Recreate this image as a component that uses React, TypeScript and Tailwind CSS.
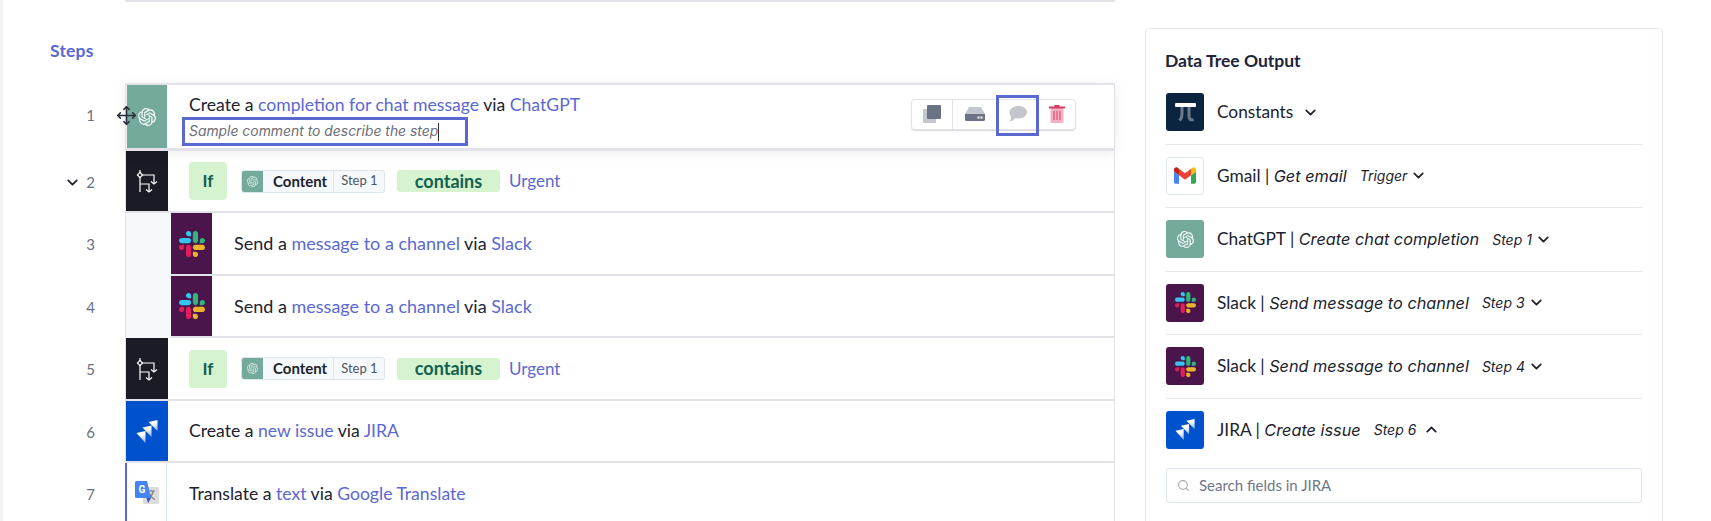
import { ChevronDown, ChevronUp, Move, Search } from "lucide-react";
import type { ReactNode } from "react";
import { SiOpenai } from "react-icons/si";

const font = "[font-family:Lato,'Noto_Sans',sans-serif]";
const italicFont = "[font-family:Inter,sans-serif] italic";

function SlackIcon({ size = 26 }: { size?: number }) {
  return (
    <svg width={size} height={size} viewBox="0 0 2447.6 2452.5">
      <path fill="#36c5f0" d="m897.4 0c-135.3.1-244.8 109.9-244.7 245.2-.1 135.3 109.5 245.1 244.8 245.2h244.8v-245.1c.1-135.3-109.5-245.1-244.9-245.3.1 0 .1 0 0 0m0 654h-652.6c-135.3.1-244.9 109.9-244.8 245.2-.2 135.3 109.4 245.1 244.7 245.3h652.7c135.3-.1 244.9-109.9 244.8-245.2.1-135.4-109.5-245.2-244.8-245.3z" />
      <path fill="#2eb67d" d="m2447.6 899.2c.1-135.3-109.5-245.1-244.8-245.2-135.3.1-244.9 109.9-244.8 245.2v245.3h244.8c135.3-.1 244.9-109.9 244.8-245.3zm-652.7 0v-654c.1-135.2-109.4-245-244.7-245.2-135.3.1-244.9 109.9-244.8 245.2v654c-.2 135.3 109.4 245.1 244.7 245.3 135.3-.1 244.9-109.9 244.8-245.3z" />
      <path fill="#ecb22e" d="m1550.1 2452.5c135.3-.1 244.9-109.9 244.8-245.2.1-135.3-109.5-245.1-244.8-245.2h-244.8v245.2c-.1 135.2 109.5 245 244.8 245.2zm0-654.1h652.7c135.3-.1 244.9-109.9 244.8-245.2.2-135.3-109.4-245.1-244.7-245.3h-652.7c-135.3.1-244.9 109.9-244.8 245.2-.1 135.4 109.4 245.2 244.7 245.3z" />
      <path fill="#e01e5a" d="m0 1553.2c-.1 135.3 109.5 245.1 244.8 245.2 135.3-.1 244.9-109.9 244.8-245.2v-245.2h-244.8c-135.3.1-244.9 109.9-244.8 245.2zm652.7 0v654c-.2 135.3 109.4 245.1 244.7 245.3 135.3-.1 244.9-109.9 244.8-245.2v-653.9c.2-135.3-109.4-245.1-244.7-245.3-135.4 0-244.9 109.8-244.8 245.1 0 0 0 .1 0 0" />
    </svg>
  );
}

function GmailIcon() {
  return (
    <svg width="22" height="17" viewBox="52 42 88 66">
      <path fill="#4285f4" d="M58 108h14V74L52 59v43c0 3.32 2.69 6 6 6" />
      <path fill="#34a853" d="M120 108h14c3.32 0 6-2.69 6-6V59l-20 15" />
      <path fill="#fbbc04" d="M120 48v26l20-15v-8c0-7.42-8.47-11.65-14.4-7.2" />
      <path fill="#ea4335" d="M72 74V48l24 18 24-18v26L96 92" />
      <path fill="#c5221f" d="M52 51v8l20 15V48l-5.6-4.2c-5.94-4.45-14.4-.22-14.4 7.2" />
    </svg>
  );
}

function JiraIcon({ id, size = 23 }: { id: string; size?: number }) {
  return (
    <svg width={size} height={size} viewBox="0 0 22 23">
      <defs>
        <linearGradient id={id} x1="0.55" y1="0" x2="0.85" y2="1">
          <stop offset="0.3" stopColor="#ffffff" />
          <stop offset="1" stopColor="#8db0ec" />
        </linearGradient>
      </defs>
      <path fill={`url(#${id})`} d="M12 2 21 0V11z" />
      <path fill={`url(#${id})`} d="M6 7.500 15 5.500V17z" />
      <path fill={`url(#${id})`} d="M0 13 9 11V23z" />
    </svg>
  );
}

function BranchIcon() {
  return (
    <svg width="24" height="24" viewBox="0 0 24 24" fill="none" stroke="#fff" strokeWidth="1.200">
      <path d="M5 1v22" />
      <path d="M5 6h14v9" />
      <path d="M16 12.500 19 15l3-2.500" />
      <path d="M5 15h9v8" />
      <path d="M11 20.500 14 23l3-2.500" />
      <rect x="3.200" y="4.200" width="3.600" height="3.600" fill="#1b1b25" transform="rotate(45 5 6)" />
    </svg>
  );
}

function TranslateIcon() {
  return (
    <svg width="24" height="26" viewBox="0 0 24 26">
      <rect x="8" y="6" width="16" height="17" rx="1.500" fill="#dcdcdc" />
      <path d="M13 10h7M16.500 9v1.500M18.500 10c-1 4-3 6-5.500 8M14.500 12.500c1 2.500 3 5 5.500 6" stroke="#7d7d7d" strokeWidth="1.100" fill="none" />
      <path d="M1.500 0H12l4 17H1.500A1.500 1.500 0 0 1 0 15.500v-14A1.500 1.500 0 0 1 1.500 0z" fill="#4285f4" />
      <path d="M11.500 17H16l-3 5z" fill="#3f51b5" />
      <text x="3.500" y="12" fontSize="10" fontWeight="700" fill="#fff" fontFamily="Roboto, sans-serif">G</text>
    </svg>
  );
}

function PiIcon() {
  return (
    <svg width="21" height="19" viewBox="0 0 21 19">
      <path d="M7 3v8c0 3-1 5-2.500 6.500M14 3v10c0 3 1.500 4.500 4.500 3.500" fill="none" stroke="#6d7a8a" strokeWidth="3" />
      <rect x="0" y="0" width="21" height="4" rx="1" fill="#fff" />
    </svg>
  );
}

function Link({ children }: { children: ReactNode }) {
  return <span className="text-[#5a68d2]">{children}</span>;
}

function StepText({ parts, large }: { parts: [string, string, string, string]; large?: boolean }) {
  return (
    <span className={`text-[#20222e] ${large ? "text-[18px]" : "text-[17.600px]"}`}>
      {parts[0]} <Link>{parts[1]}</Link> {parts[2]} <Link>{parts[3]}</Link>
    </span>
  );
}

function StepNumber({ n, chevron, offset }: { n: number; chevron?: boolean; offset?: boolean }) {
  return (
    <div className={`flex w-[122px] shrink-0 items-center justify-end gap-[5px] pr-[30px] text-[15px] text-[#697180] ${offset ? "pb-[4px]" : ""}`}>
      {chevron && <ChevronDown size={17} strokeWidth={2.500} className="text-[#20222e]" />}
      {n}
    </div>
  );
}

function Condition() {
  return (
    <div className="flex items-center pl-[21px]">
      <div className="flex h-[38px] w-[38px] items-center justify-center rounded-[4px] bg-[#d6f3cf] text-[17px] font-bold text-[#12604f]">
        If
      </div>
      <div className="ml-[14px] flex h-[23px] w-[144px] items-center overflow-hidden rounded-[3px] border border-[#dbe6ef] bg-[#f5f9fc]">
        <div className="flex h-full w-[21px] items-center justify-center bg-[#74aa9c]">
          <SiOpenai size={11} color="#dfeee9" />
        </div>
        <span className="ml-[10px] text-[15px] font-bold text-[#1d1f2b]">Content</span>
        <span className="ml-[6px] flex h-full items-center border-l border-[#dbe6ef] pl-[7px] text-[13px] text-[#4b5563]">
          Step 1
        </span>
      </div>
      <div className="ml-[12px] flex h-[22px] w-[103px] items-center justify-center rounded-[3px] bg-[#d6f3cf] text-[18px] font-bold text-[#12604f]">
        contains
      </div>
      <span className="ml-[9px] text-[17px]">
        <Link>Urgent</Link>
      </span>
    </div>
  );
}

function Toolbar() {
  return (
    <div className="relative mr-[38px] mb-[5px] ml-auto flex h-[31px] w-[165px] items-center self-center rounded-[4px] border border-[#e3e4e9] shadow-[0_1px_1px_#d6d7dd]">
      <div className="flex h-full w-[41px] items-center justify-center border-r border-[#e3e4e9]">
        <svg width="18" height="18" viewBox="0 0 18 18">
          <rect x="0" y="4" width="13" height="14" rx="1" fill="#c3c6cd" />
          <rect x="4" y="0" width="14" height="14" rx="1" fill="#6b7285" />
        </svg>
      </div>
      <div className="flex h-full w-[44px] items-center justify-center">
        <svg width="20" height="14" viewBox="0 0 20 14">
          <path d="M4 0h12l4 7H0z" fill="#c3c6cd" />
          <path d="M0 7h20v5.500a1.500 1.500 0 0 1-1.500 1.500h-17A1.500 1.500 0 0 1 0 12.500z" fill="#6b7285" />
          <rect x="12.500" y="9.500" width="2" height="2" fill="#fff" />
          <rect x="15.500" y="9.500" width="2" height="2" fill="#fff" />
        </svg>
      </div>
      <div className="flex h-full w-[42px] items-center justify-center">
        <svg width="18" height="16" viewBox="0 0 18 16">
          <path d="M9.500 0C14 0 18 2.700 18 6.300s-4 6.200-8.500 6.200c-1 0-2-.1-2.900-.4C5 14 2.500 15.500 0 16c1.300-1.400 2.100-3 2.300-5C1 9.900 0.500 8 0.500 6.300 0.500 2.700 5 0 9.500 0z" fill="#c3c6cd" />
        </svg>
      </div>
      <div className="flex h-full w-[36px] items-center justify-center">
        <svg width="16" height="18" viewBox="0 0 16 18">
          <rect x="1.500" y="3" width="13" height="15" rx="1.500" fill="#f1b3c3" />
          <rect x="0" y="1.500" width="16" height="2" fill="#d63a63" />
          <rect x="5.500" y="0" width="5" height="2" fill="#d63a63" />
          <path d="M5 6v9M8 6v9M11 6v9" stroke="#d63a63" strokeWidth="1" />
        </svg>
      </div>
      <div className="absolute top-[-5px] left-[84px] h-[41px] w-[43px] border-[3px] border-[#5a68cf]" />
    </div>
  );
}

const treeItems: { key: string; icon: ReactNode; bg: string; name: string; action?: string; tag?: string; open?: boolean }[] = [
  { key: "constants", icon: <PiIcon />, bg: "bg-[#0b2440]", name: "Constants" },
  { key: "gmail", icon: <GmailIcon />, bg: "bg-white border border-[#dfe7ef]", name: "Gmail", action: "Get email", tag: "Trigger" },
  { key: "gpt", icon: <SiOpenai size={17} color="#fff" />, bg: "bg-[#74aa9c]", name: "ChatGPT", action: "Create chat completion", tag: "Step 1" },
  { key: "slack3", icon: <SlackIcon size={21} />, bg: "bg-[#4a154b]", name: "Slack", action: "Send message to channel", tag: "Step 3" },
  { key: "slack4", icon: <SlackIcon size={21} />, bg: "bg-[#4a154b]", name: "Slack", action: "Send message to channel", tag: "Step 4" },
  { key: "jira", icon: <JiraIcon id="jira-tree" size={21} />, bg: "bg-[#0052cc]", name: "JIRA", action: "Create issue", tag: "Step 6", open: true },
];

function TreeRow({ item, last }: { item: (typeof treeItems)[number]; last: boolean }) {
  return (
    <div className={`flex items-center py-[12.250px] ${last ? "" : "border-b border-[#e3e8ef]"}`}>
      <div className={`flex h-[38px] w-[38px] shrink-0 items-center justify-center rounded-[3px] ${item.bg}`}>{item.icon}</div>
      <span className="ml-[13px] text-[17.300px] text-[#20222e]">
        {item.name}
        {item.action && (
          <>
            {" | "}
            <i className={`${italicFont} text-[16.300px]`}>{item.action}</i>
          </>
        )}
      </span>
      {item.tag && <i className={`ml-[13px] text-[14px] text-[#20222e] ${italicFont}`}>{item.tag}</i>}
      {item.open ? (
        <ChevronUp size={17} strokeWidth={2.500} className="ml-[7px] text-[#20222e]" />
      ) : (
        <ChevronDown size={17} strokeWidth={2.500} className={`text-[#20222e] ${item.tag ? "ml-[3px]" : "ml-[9px]"}`} />
      )}
    </div>
  );
}

export default function App() {
  return (
    <div className={`flex h-[521px] overflow-hidden border-l-[3px] border-[#f1f2f4] bg-white ${font}`}>
      <div className="w-[1112px] shrink-0">
        <div className="ml-[122px] h-[2px] bg-[#e2e2e8]" />
        <div className="mt-[40px] ml-[47px] text-[17.500px] leading-[18px] font-bold tracking-[0.2px] text-[#5a68d2]">Steps</div>
        <div className="mt-[23px]">
          <div className="flex">
            <StepNumber n={1} offset />
            <div className="relative flex h-[68px] w-[990px] border-x border-t-2 border-b-[3px] border-[#e2e2e8] shadow-[0_2px_12px_rgba(0,0,0,0.08)]">
              <div className="flex w-[41px] shrink-0 items-center justify-center border-l border-[#f1f2f4] bg-[#74aa9c]">
                <SiOpenai size={18} color="#fff" />
              </div>
              <div className="flex flex-col pt-[7px] pl-[22px]">
                <StepText parts={["Create a", "completion for chat message", "via", "ChatGPT"]} />
                <div className={`mt-[-1px] ml-[-7px] flex h-[29px] w-[286px] items-center border-[3px] border-[#5a68cf] pl-[4px] text-[13.900px] text-[#6b6d78] ${italicFont}`}>
                  Sample comment to describe the step
                  <span className="h-[18px] w-px bg-[#333]" />
                </div>
              </div>
              <Toolbar />
              <Move size={21} strokeWidth={1.700} className="absolute top-[20px] left-[-10px] text-[#2b2d3a]" />
            </div>
          </div>
          <div className="flex h-[62px]">
            <StepNumber n={2} chevron />
            <div className="flex w-[990px] border-x border-b-2 border-[#e2e2e8]">
              <div className="flex w-[42px] shrink-0 items-center justify-center bg-[#1b1b25]">
                <BranchIcon />
              </div>
              <Condition />
            </div>
          </div>
          {[3, 4].map((n) => (
            <div key={n} className={`flex ${n === 3 ? "h-[63px]" : "h-[62px]"}`}>
              <StepNumber n={n} />
              <div className="flex w-[990px] border-x border-[#e2e2e8] bg-[#f5f9fc]">
                <div className="ml-[45px] flex grow border-b-2 border-[#e2e2e8] bg-white">
                  <div className="flex w-[41px] shrink-0 items-center justify-center bg-[#4a154b]">
                    <SlackIcon />
                  </div>
                  <div className="flex items-center pl-[22px]">
                    <StepText large parts={["Send a", "message to a channel", "via", "Slack"]} />
                  </div>
                </div>
              </div>
            </div>
          ))}
          <div className="flex h-[63px]">
            <StepNumber n={5} />
            <div className="flex w-[990px] border-x border-b-2 border-[#e2e2e8]">
              <div className="flex w-[42px] shrink-0 items-center justify-center bg-[#1b1b25]">
                <BranchIcon />
              </div>
              <Condition />
            </div>
          </div>
          <div className="flex h-[62px]">
            <StepNumber n={6} />
            <div className="flex w-[990px] border-x border-b-2 border-[#e2e2e8]">
              <div className="flex w-[42px] shrink-0 items-center justify-center bg-[#0052cc]">
                <JiraIcon id="jira-step" />
              </div>
              <div className="flex items-center pl-[21px]">
                <StepText parts={["Create a", "new issue", "via", "JIRA"]} />
              </div>
            </div>
          </div>
          <div className="flex h-[62px]">
            <StepNumber n={7} />
            <div className="flex w-[990px] border-r border-l-2 border-r-[#e2e2e8] border-l-[#5a68cf]">
              <div className="flex w-[40px] shrink-0 items-center justify-center border-r border-[#dbe6ef]">
                <TranslateIcon />
              </div>
              <div className="flex items-center pl-[22px]">
                <StepText parts={["Translate a", "text", "via", "Google Translate"]} />
              </div>
            </div>
          </div>
        </div>
      </div>
      <div className="mt-[28px] ml-[30px] h-[520px] w-[518px] shrink-0 rounded-[4px] border border-[#e3e8ef] px-[20px] pt-[21px]">
        <div className="mb-[9px] ml-[-1px] text-[17.500px] leading-[22px] font-bold text-[#20243a]">Data Tree Output</div>
        {treeItems.map((item, i) => (
          <TreeRow key={item.key} item={item} last={i === treeItems.length - 1} />
        ))}
        <div className="mt-[7px] flex h-[35px] items-center rounded-[3px] border border-[#dfe5ec] pl-[10px] text-[15px] text-[#6f7787]">
          <Search size={13} className="text-[#a4a9b3]" />
          <span className="ml-[9px]">Search fields in JIRA</span>
        </div>
      </div>
    </div>
  );
}
